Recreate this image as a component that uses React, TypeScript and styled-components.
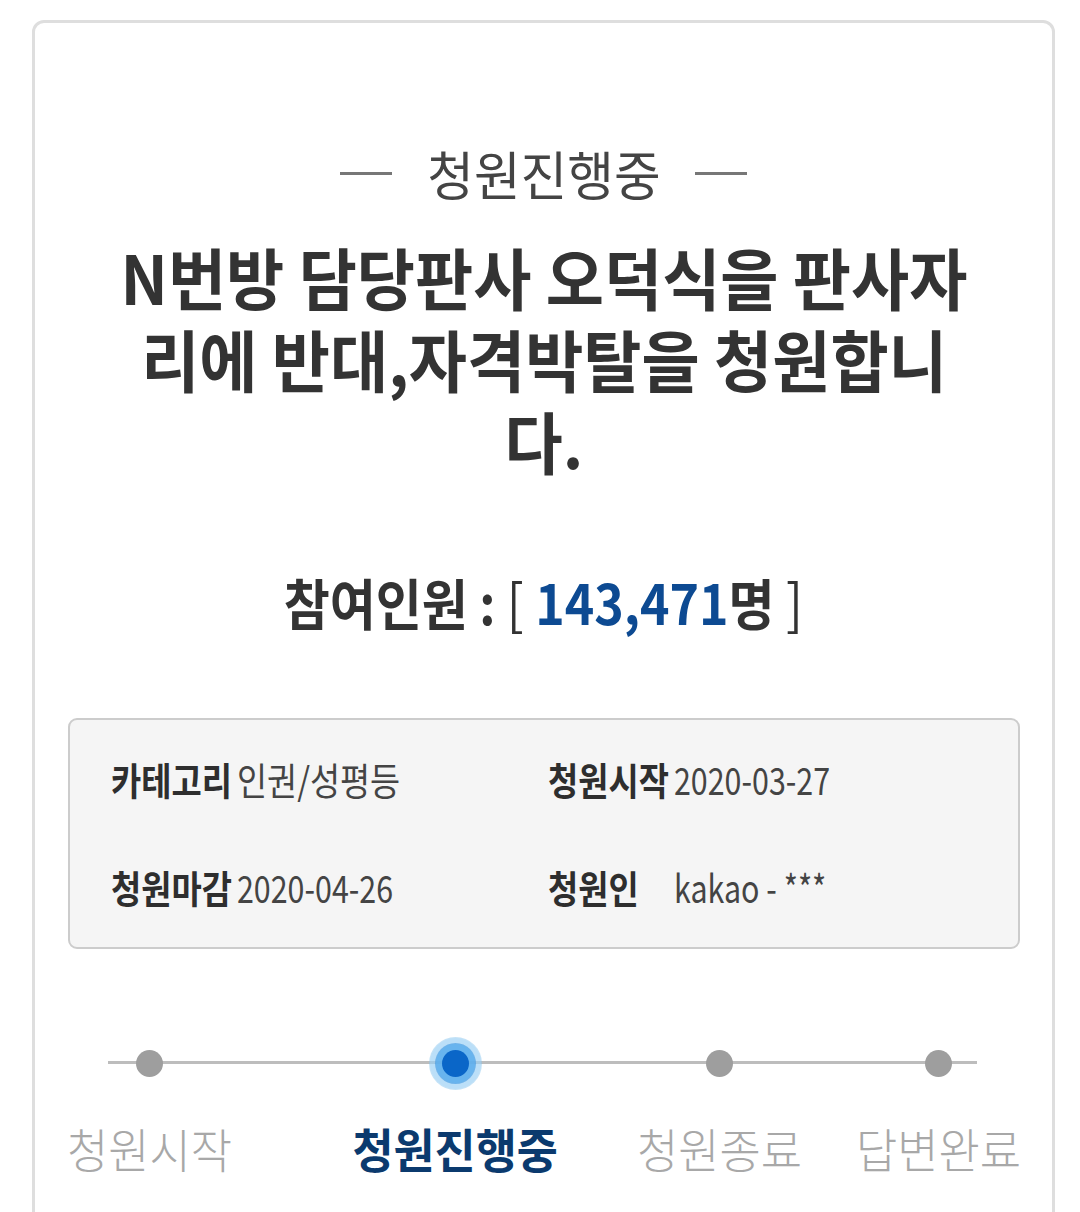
import React from "react";
import styled, { createGlobalStyle } from "styled-components";

const GlobalStyle = createGlobalStyle`
  html, body {
    margin: 0;
    padding: 0;
    background: #ffffff;
  }
  body {
    font-family: "Noto Sans CJK KR", "Noto Sans", sans-serif;
    color: #333333;
  }
  * { box-sizing: border-box; }
`;

const Page = styled.div`
  padding: 20px 25px 0 32px;
`;

const Card = styled.section`
  border: 3px solid #dedede;
  border-radius: 12px;
  padding: 120px 0 120px;
  display: flex;
  flex-direction: column;
  align-items: center;
`;

const StatusHeader = styled.div`
  display: flex;
  align-items: center;
  gap: 30px;
  height: 60px;
`;

const Rule = styled.span`
  display: block;
  width: 52px;
  height: 3px;
  background: #777777;
`;

const StatusText = styled.h3`
  margin: 0;
  font-size: 53px;
  line-height: 60px;
  font-weight: 400;
  color: #444444;
  transform: scaleX(0.957);
  white-space: nowrap;
`;

const Title = styled.h2`
  margin: 32px 0 0;
  width: 900px;
  font-size: 67px;
  line-height: 82px;
  font-weight: 700;
  color: #333333;
  text-align: center;
  transform: scaleX(0.944);
`;

const Count = styled.p`
  margin: 85px 0 0;
  font-size: 55px;
  line-height: 70px;
  font-weight: 700;
  color: #333333;
  white-space: nowrap;
  transform: scaleX(0.91);
`;

const Bracket = styled.span`
  font-weight: 400;
`;

const CountNumber = styled.span`
  color: #0d4a92;
`;

const InfoBox = styled.div`
  margin-top: 82px;
  width: 952px;
  background: #f5f5f5;
  border: 2px solid #cccccc;
  border-radius: 9px;
  padding: 34px 0 35px 41px;
  display: grid;
  grid-template-columns: 437px 1fr;
  row-gap: 58px;
`;

const InfoLine = styled.div`
  display: flex;
  align-items: center;
  font-size: 38px;
  line-height: 50px;
  white-space: nowrap;
`;

const InfoLabel = styled.span`
  display: inline-block;
  width: 144px;
  margin-right: -18px;
  font-weight: 700;
  color: #2e2e2e;
  transform: scaleX(0.865);
  transform-origin: left center;
`;

const InfoValue = styled.span<{ $hangul?: boolean }>`
  display: inline-block;
  font-weight: 400;
  color: #444444;
  transform: scaleX(${(p) => (p.$hangul ? 0.86 : 0.8)});
  transform-origin: left center;
`;

const StepList = styled.ol`
  position: relative;
  align-self: stretch;
  list-style: none;
  margin: 74px 0 0;
  padding: 0;
  display: flex;
  align-items: flex-start;
`;

const Track = styled.span`
  position: absolute;
  left: 73px;
  top: 38px;
  width: 869px;
  height: 3px;
  background: #bdbdbd;
`;

const Step = styled.li<{ $offset: number }>`
  margin-left: ${(p) => p.$offset}px;
  display: flex;
  flex-direction: column;
  align-items: center;
`;

const DotWrap = styled.div`
  height: 80px;
  width: 60px;
  display: flex;
  align-items: center;
  justify-content: center;
`;

const Dot = styled.span<{ $active?: boolean }>`
  position: relative;
  z-index: 1;
  display: block;
  width: 27px;
  height: 27px;
  border-radius: 50%;
  background: ${(p) => (p.$active ? "#0a66c8" : "#9e9e9e")};
  box-shadow: ${(p) =>
    p.$active
      ? "0 0 0 6px rgba(100, 180, 240, 0.6), 0 0 0 7px rgba(60, 150, 225, 0.6), 0 0 0 12px rgba(170, 215, 248, 0.35), 0 0 0 13px rgba(140, 200, 240, 0.5)"
      : "none"};
`;

const StepLabel = styled.span<{ $active?: boolean }>`
  margin-top: 15px;
  font-size: 47px;
  line-height: 60px;
  white-space: nowrap;
  font-weight: ${(p) => (p.$active ? 700 : 300)};
  color: ${(p) => (p.$active ? "#0b3a6e" : "#a8a8a8")};
  transform: scaleX(${(p) => (p.$active ? 0.95 : 0.955)});
`;

const steps = [
  { label: "청원시작", offset: 28 },
  { label: "청원진행중", offset: 111, active: true },
  { label: "청원종료", offset: 70 },
  { label: "답변완료", offset: 46 },
];

const info = [
  { label: "카테고리", value: "인권/성평등", hangul: true },
  { label: "청원시작", value: "2020-03-27" },
  { label: "청원마감", value: "2020-04-26" },
  { label: "청원인", value: "kakao - ***" },
];

export default function App() {
  return (
    <>
      <GlobalStyle />
      <Page>
        <Card>
          <StatusHeader>
            <Rule />
            <StatusText>청원진행중</StatusText>
            <Rule />
          </StatusHeader>
          <Title>N번방 담당판사 오덕식을 판사자리에 반대,자격박탈을 청원합니다.</Title>
          <Count>
            참여인원 : <Bracket>[</Bracket> <CountNumber>143,471</CountNumber>명{" "}
            <Bracket>]</Bracket>
          </Count>
          <InfoBox>
            {info.map((item) => (
              <InfoLine key={item.label}>
                <InfoLabel>{item.label}</InfoLabel>
                <InfoValue $hangul={item.hangul}>{item.value}</InfoValue>
              </InfoLine>
            ))}
          </InfoBox>
          <StepList>
            <Track />
            {steps.map((s) => (
              <Step key={s.label} $offset={s.offset}>
                <DotWrap>
                  <Dot $active={s.active} />
                </DotWrap>
                <StepLabel $active={s.active}>{s.label}</StepLabel>
              </Step>
            ))}
          </StepList>
        </Card>
      </Page>
    </>
  );
}
